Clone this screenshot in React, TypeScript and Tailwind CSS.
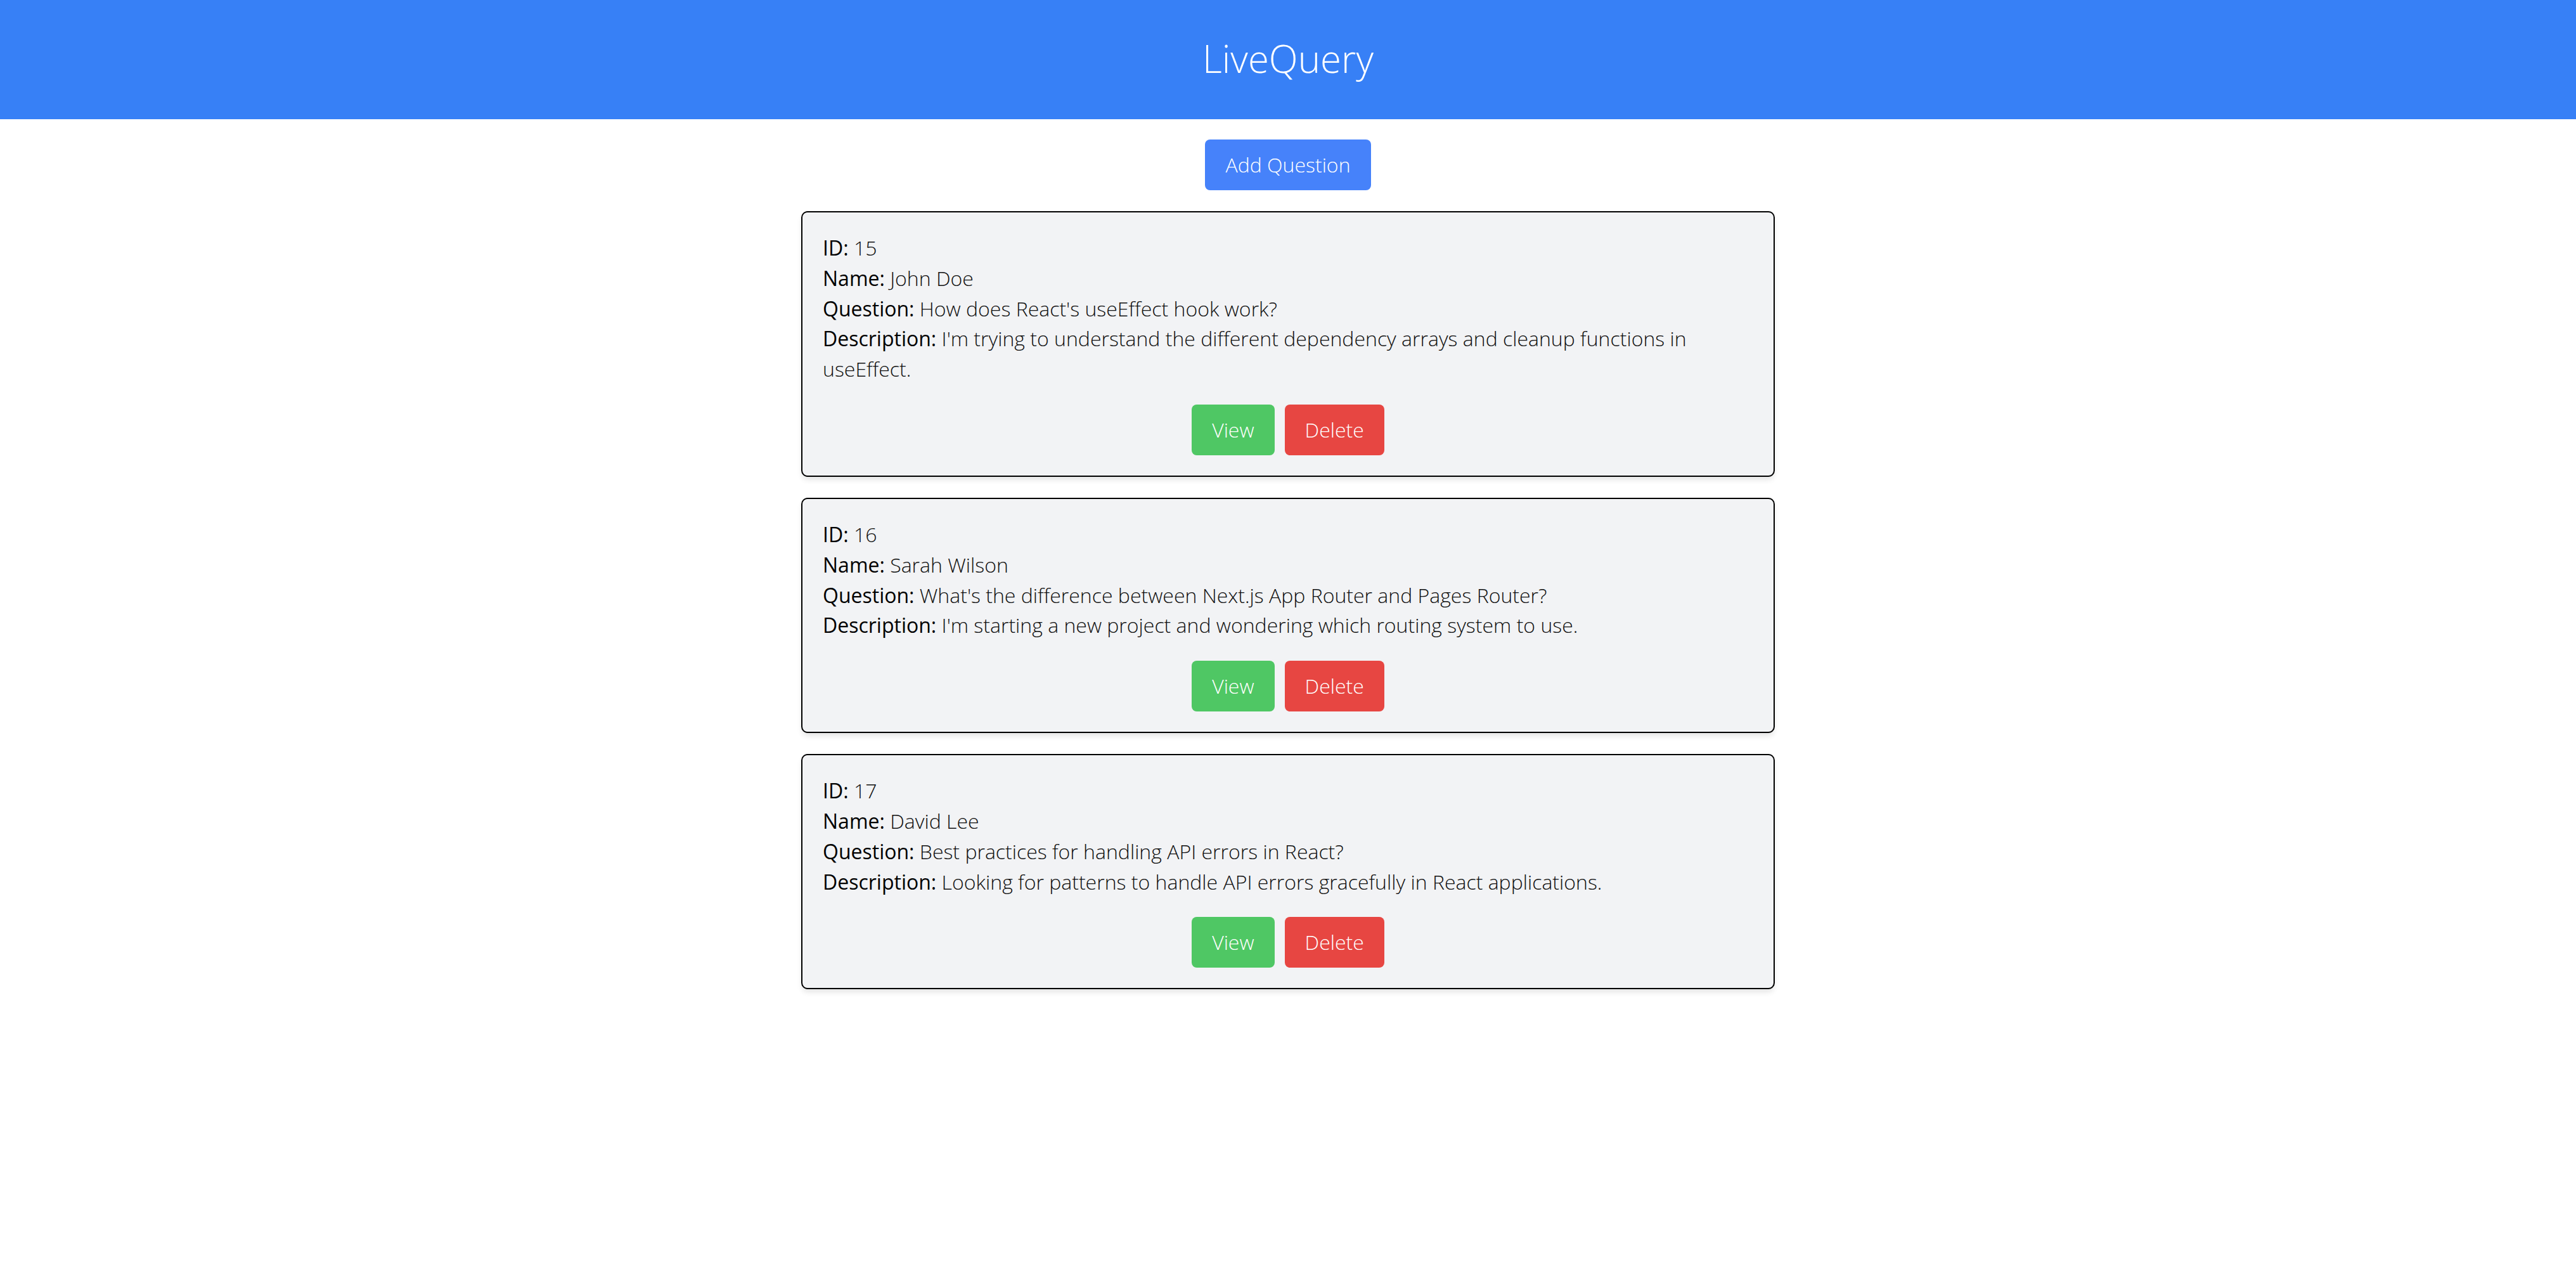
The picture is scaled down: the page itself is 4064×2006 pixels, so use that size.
const questions = [
  {
    id: 15,
    name: "John Doe",
    question: "How does React's useEffect hook work?",
    description:
      "I'm trying to understand the different dependency arrays and cleanup functions in useEffect.",
  },
  {
    id: 16,
    name: "Sarah Wilson",
    question: "What's the difference between Next.js App Router and Pages Router?",
    description: "I'm starting a new project and wondering which routing system to use.",
  },
  {
    id: 17,
    name: "David Lee",
    question: "Best practices for handling API errors in React?",
    description: "Looking for patterns to handle API errors gracefully in React applications.",
  },
];

function Field({ label, value }: { label: string; value: string | number }) {
  return (
    <p>
      <span className="font-normal text-black">{label}:</span> {value}
    </p>
  );
}

export default function App() {
  return (
    <div
      className="min-h-screen bg-white font-light text-[32px] leading-[47.8px] text-[#111]"
      style={{ fontFamily: "'Open Sans', 'Noto Sans', sans-serif" }}
    >
      {/* Header */}
      <header className="h-[188px] bg-[#3780f6] flex items-center justify-center pb-[4px]">
        <h1 className="text-[60px] leading-[72px] font-light text-white">LiveQuery</h1>
      </header>

      <main className="flex flex-col items-center pt-[32px]">
        <button className="h-[80px] px-[32px] rounded-[8px] bg-[#4682fa] text-white font-light">
          Add Question
        </button>

        <div className="w-[1536px] mt-[33px] flex flex-col gap-[33px]">
          {questions.map((q) => (
            <div
              key={q.id}
              className="rounded-[10px] border-2 border-black bg-[#f2f3f5] p-[32px] shadow-[0_6px_10px_-2px_rgba(0,0,0,0.12)]"
            >
              <Field label="ID" value={q.id} />
              <Field label="Name" value={q.name} />
              <Field label="Question" value={q.question} />
              <Field label="Description" value={q.description} />

              <div className="mt-[32px] flex justify-center gap-[16px]">
                <button className="h-[80px] px-[32px] rounded-[8px] bg-[#4fc764] text-white font-light">
                  View
                </button>
                <button className="h-[80px] px-[32px] rounded-[8px] bg-[#e74642] text-white font-light">
                  Delete
                </button>
              </div>
            </div>
          ))}
        </div>
      </main>
    </div>
  );
}
